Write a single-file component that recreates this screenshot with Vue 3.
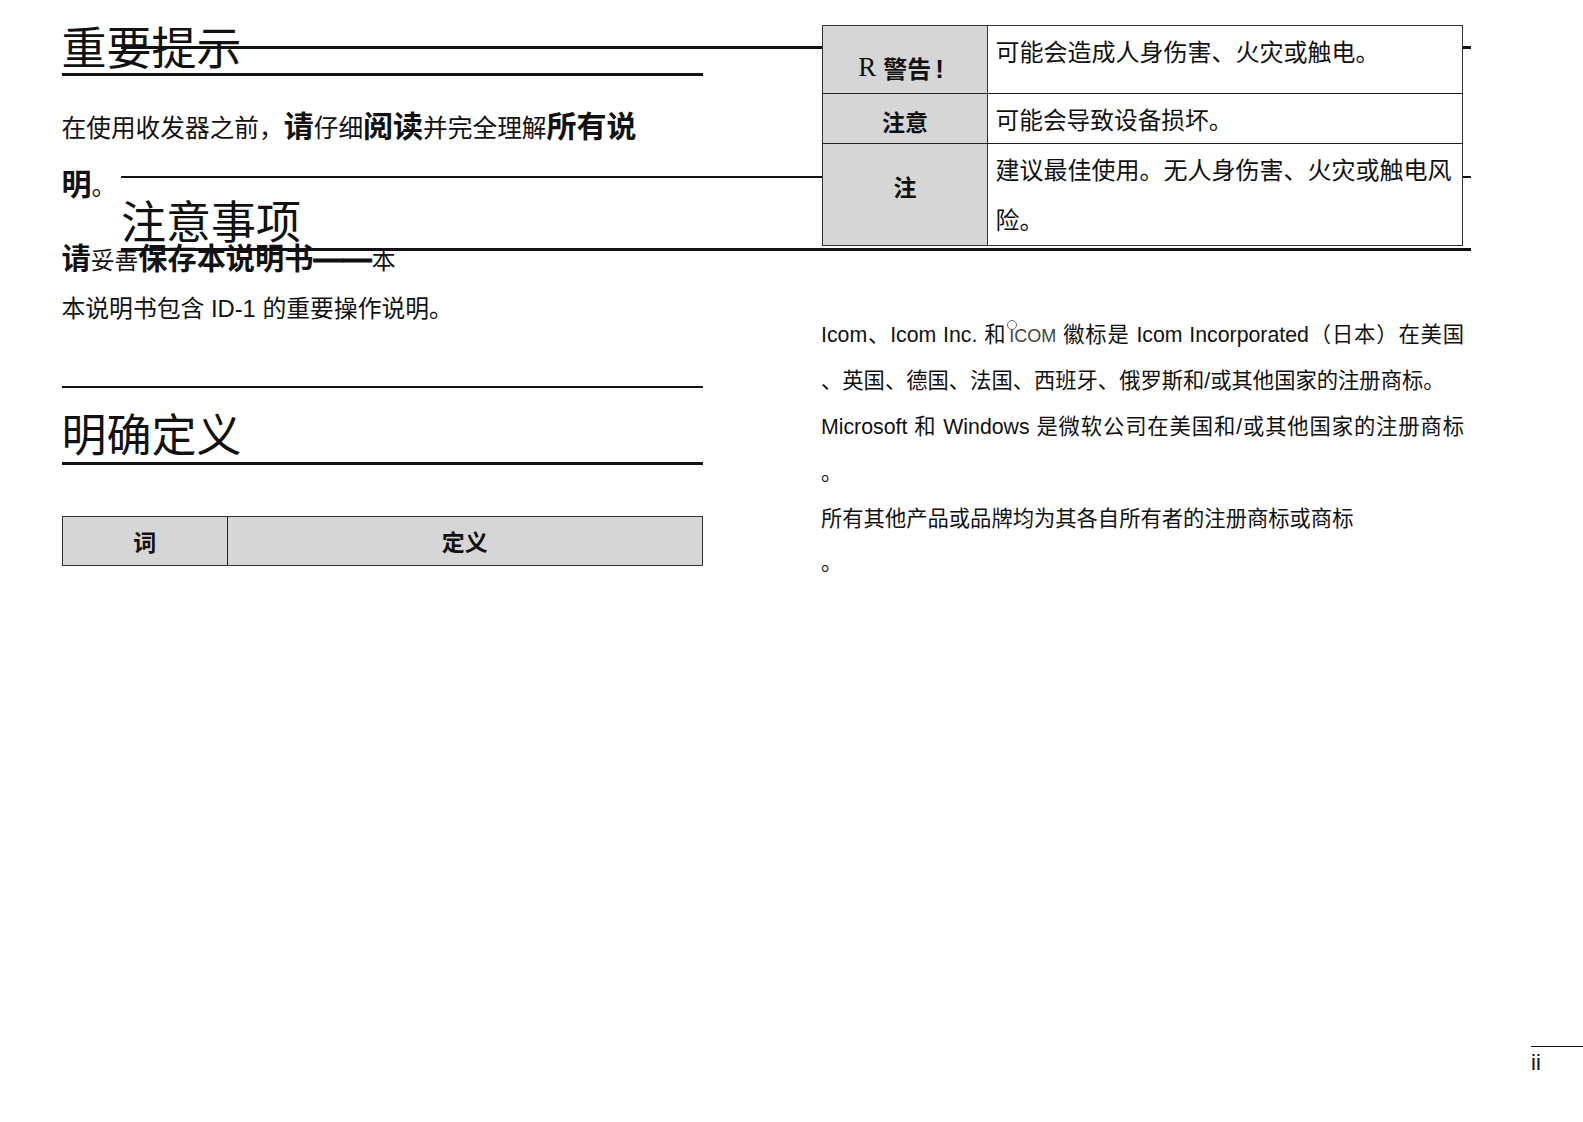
<script setup>
const longRules = [
  { id: 1, cls: 'rule-a' },
  { id: 2, cls: 'rule-b' },
  { id: 3, cls: 'rule-c' }
]
</script>

<template>
  <div class="page">
    <div v-for="r in longRules" :key="r.id" class="long-rule" :class="r.cls"></div>

    <section class="col col-left">
      <h1 class="title title-first">重要提示</h1>
      <p class="para para-intro">在使用收发器之前，<b>请</b>仔细<b>阅读</b>并完全理解<b>所有说</b><br /><b>明</b>。</p>
      <p class="para para-keep"><b>请</b>妥善<b>保存本说明书<span class="dash">——</span></b>本</p>
      <p class="para para-info">本说明书包含 ID-1 的重要操作说明。</p>
      <h1 class="title title-second">明确定义</h1>
      <div class="def-head">
        <div class="def-term">词</div>
        <div class="def-desc">定义</div>
      </div>
    </section>

    <h1 class="title-floating">注意事项</h1>

    <section class="col col-right">
      <div class="notice">
        <div class="notice-row row-warn">
          <div class="notice-key key-warn"><span class="r-mark">R</span> <b>警告<span class="bang">!</span></b></div>
          <div class="notice-val">可能会造成人身伤害、火灾或触电。</div>
        </div>
        <div class="notice-row row-caution">
          <div class="notice-key key-caution"><b>注意</b></div>
          <div class="notice-val">可能会导致设备损坏。</div>
        </div>
        <div class="notice-row row-note">
          <div class="notice-key key-note"><b>注</b></div>
          <div class="notice-val">建议最佳使用。无人身伤害、火灾或触电风<br />险。</div>
        </div>
      </div>

      <div class="legal">
        <p class="legal-line justified">Icom、Icom Inc. 和<span class="logo"><i class="logo-ring"></i>ICOM</span> 徽标是 Icom Incorporated（日本）在美国</p>
        <p class="legal-line">、英国、德国、法国、西班牙、俄罗斯和/或其他国家的注册商标。</p>
        <p class="legal-line justified">Microsoft 和 Windows 是微软公司在美国和/或其他国家的注册商标</p>
        <p class="legal-line">。</p>
        <p class="legal-line">所有其他产品或品牌均为其各自所有者的注册商标或商标</p>
        <p class="legal-line legal-last">。</p>
      </div>
    </section>

    <footer class="folio">ii</footer>
  </div>
</template>

<style>
html, body { margin: 0; background: #fff; }
</style>

<style scoped>
.page {
  position: relative;
  width: 1583px;
  height: 1122px;
  overflow: hidden;
  display: flex;
  gap: 119.5px;
  padding-left: 61.5px;
  box-sizing: border-box;
  background: #fff;
  color: #111;
  font-family: "Liberation Sans", "Noto Sans CJK SC", sans-serif;
}
.col { width: 641px; flex: none; }
p { margin: 0; }
h1 { margin: 0; font-weight: 400; }
b { font-weight: 700; }

.long-rule { position: absolute; left: 121px; width: 1350px; background: #111; }
.rule-a { top: 46px; height: 3px; }
.rule-b { top: 176px; height: 2px; }
.rule-c { top: 248px; height: 3px; }

.title {
  font-size: 45px;
  line-height: 52px;
  height: 49px;
  border-bottom: 3px solid #111;
}
.title-first { margin-top: 24px; }
.title-second {
  border-top: 2px solid #111;
  padding-top: 25px;
  margin-top: 52px;
  line-height: 48px;
}
.title-floating {
  position: absolute;
  left: 121px;
  top: 199px;
  font-size: 45px;
  line-height: 50px;
}

.para { font-size: 23.8px; line-height: 56px; }
.para b { font-size: 29.2px; }
.para-intro { margin-top: 23px; font-size: 24.7px; }
.para-intro b { font-size: 30px; }
.para-keep { margin-top: 15.5px; }
.dash { -webkit-text-stroke: 0.9px #111; }
.para-info { line-height: 50px; margin-top: -5px; }

.def-head {
  display: flex;
  margin-top: 51px;
  height: 50px;
  box-sizing: border-box;
  border: 1.5px solid #333;
  background: #d6d6d6;
  font-size: 23px;
  font-weight: 700;
}
.def-term {
  width: 164.5px;
  flex: none;
  border-right: 1px solid #222;
  display: flex;
  align-items: center;
  justify-content: center;
}
.def-desc {
  flex: 1;
  display: flex;
  align-items: center;
  justify-content: center;
}

.col-right { position: relative; padding-top: 25px; }
.notice {
  position: relative;
  background: #fff;
  border: 1.5px solid #333;
  box-sizing: border-box;
  width: 641px;
}
.notice-row { display: flex; }
.notice-row + .notice-row { border-top: 1.5px solid #222; }
.row-warn { height: 67px; }
.row-caution { height: 49px; }
.row-note { height: 101px; }
.notice-key {
  width: 165px;
  flex: none;
  box-sizing: border-box;
  background: #d6d6d6;
  border-right: 1px solid #333;
  display: flex;
  align-items: center;
  justify-content: center;
  gap: 7px;
  font-size: 23px;
}
.key-warn { padding-top: 16px; padding-right: 8px; font-size: 24px; }
.key-caution { padding-top: 4px; }
.key-note { padding-bottom: 17px; }
.r-mark { font-family: "Liberation Serif", serif; font-size: 27px; font-weight: 400; }
.bang { margin-left: 4px; font-size: 26px; }
.notice-val {
  flex: 1;
  padding: 2px 0 0 7.5px;
  font-size: 24px;
  line-height: 49.5px;
}
.row-caution .notice-val { font-size: 23.7px; padding-top: 3px; }

.legal { margin-top: 66px; }
.legal-line {
  font-size: 21.3px;
  line-height: 46px;
  width: 643px;
  height: 46px;
  margin-left: -1px;
}
.legal-last { margin-top: -2px; }
.justified { text-align: justify; text-align-last: justify; }
.logo {
  position: relative;
  display: inline-block;
  margin-left: 3px;
  font-size: 18px;
  color: #444;
}
.logo-ring {
  position: absolute;
  left: -2px;
  top: 7px;
  width: 8px;
  height: 8px;
  border: 1px solid #666;
  border-radius: 50%;
}

.folio {
  position: absolute;
  left: 1531px;
  right: 0;
  top: 1046px;
  border-top: 1.5px solid #111;
  font-size: 22px;
  line-height: 32px;
}
</style>
